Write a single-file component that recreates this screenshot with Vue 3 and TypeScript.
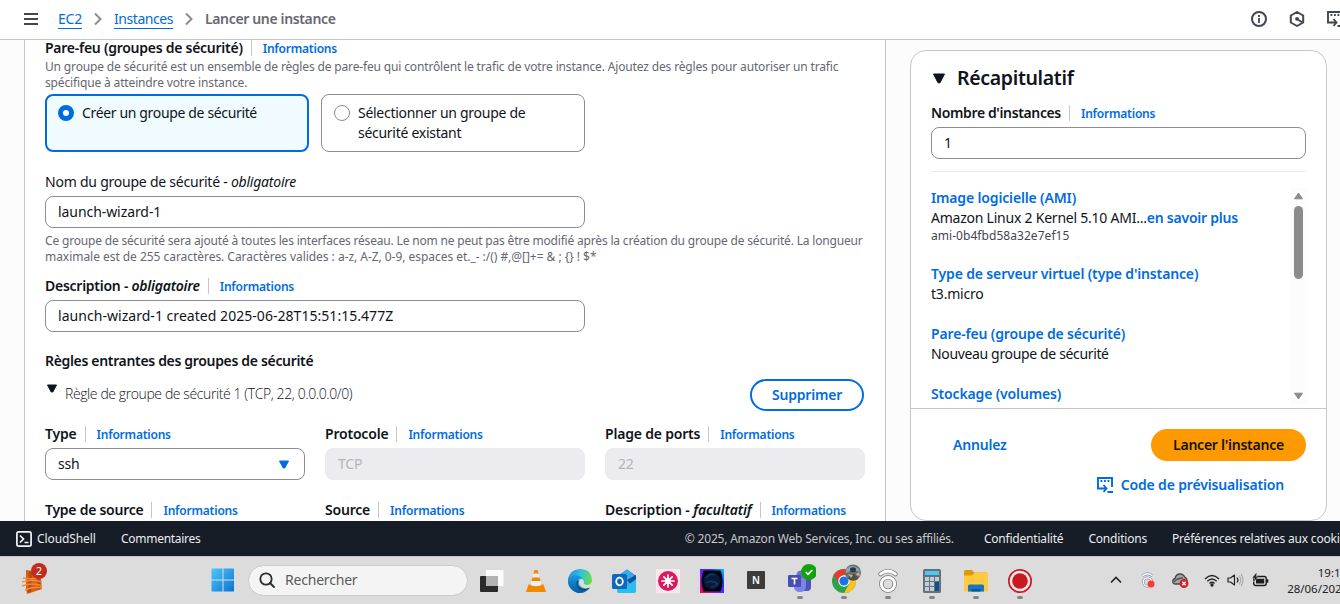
<script setup lang="ts">
interface Field {
  key: string
  label: string
  qualifier?: string
  value?: string
  kind?: 'select' | 'disabled'
}

const info = 'Informations'

const fields: Field[] = [
  { key: 'type', label: 'Type', value: 'ssh', kind: 'select' },
  { key: 'protocol', label: 'Protocole', value: 'TCP', kind: 'disabled' },
  { key: 'ports', label: 'Plage de ports', value: '22', kind: 'disabled' },
  { key: 'srctype', label: 'Type de source' },
  { key: 'source', label: 'Source' },
  { key: 'desc', label: 'Description - ', qualifier: 'facultatif' },
]
</script>

<template>
  <div class="screen">
    <header class="topbar">
      <svg class="burger" width="16" height="14" viewBox="0 0 16 14"><path d="M1 2h14M1 7h14M1 12h14" stroke="#424650" stroke-width="2" /></svg>
      <nav class="crumbs">
        <a class="crumb c1">EC2</a>
        <svg width="10" height="14" viewBox="0 0 10 14"><path d="M2 1.500l5.500 5.500L2 12.500" fill="none" stroke="#8c8c94" stroke-width="2" /></svg>
        <a class="crumb c2">Instances</a>
        <svg width="10" height="14" viewBox="0 0 10 14"><path d="M2 1.500l5.500 5.500L2 12.500" fill="none" stroke="#8c8c94" stroke-width="2" /></svg>
        <span class="here">Lancer une instance</span>
      </nav>
      <div class="tools">
        <svg width="16" height="16" viewBox="0 0 16 16" fill="none" stroke="#424650" stroke-width="2"><circle cx="8" cy="8" r="7" /><path d="M8 7v5M8 4v2" stroke-width="1.800" /></svg>
        <svg width="16" height="16" viewBox="0 0 16 16" fill="none" stroke="#424650" stroke-width="2"><path d="M8 1l6.200 3.500v7L8 15l-6.200-3.500v-7z" stroke-linejoin="round" /><path d="M8 8l5.500 3.500" /><circle cx="8" cy="7.800" r="1.900" fill="#424650" stroke="none" /></svg>
        <svg width="16" height="16" viewBox="0 0 16 16" fill="none" stroke="#424650" stroke-width="1.900"><path d="M4.500 11.500H1V1h14v9" /><path d="M3.500 4h1.800M7 4h1.800M10.500 4h1.800M4 11.500h5M6.500 8l3 3.500-3 3.500M10.500 15H16" /></svg>
      </div>
    </header>

    <main class="body">
      <section class="form">
        <div class="label first"><b class="l-fw">Pare-feu (groupes de sécurité)</b><i class="bar" /><a class="info">{{ info }}</a></div>
        <p class="hint"><span class="h1">Un groupe de sécurité est un ensemble de règles de pare-feu qui contrôlent le trafic de votre instance. Ajoutez des règles pour autoriser un trafic</span><br><span class="h2">spécifique à atteindre votre instance.</span></p>
        <div class="tiles">
          <div class="tile on"><span class="radio" /><span class="txt">Créer un groupe de sécurité</span></div>
          <div class="tile"><span class="radio" /><span class="txt">Sélectionner un groupe de<br>sécurité existant</span></div>
        </div>
        <div class="label name"><span class="l-name">Nom du groupe de sécurité - <em>obligatoire</em></span></div>
        <div class="input half"><span class="v-name">launch-wizard-1</span></div>
        <p class="hint below"><span class="h3">Ce groupe de sécurité sera ajouté à toutes les interfaces réseau. Le nom ne peut pas être modifié après la création du groupe de sécurité. La longueur</span><br><span class="h4">maximale est de 255 caractères. Caractères valides : a-z, A-Z, 0-9, espaces et._- :/() #,@[]+= &amp; ; {} ! $*</span></p>
        <div class="label descr"><b class="l-descr">Description - <em>obligatoire</em></b><i class="bar" /><a class="info">{{ info }}</a></div>
        <div class="input half"><span class="v-descr">launch-wizard-1 created 2025-06-28T15:51:15.477Z</span></div>
        <div class="label rules"><b class="l-rules">Règles entrantes des groupes de sécurité</b></div>
        <div class="rule">
          <svg width="12" height="9" viewBox="0 0 12 9"><path d="M1.500 1h9L6.800 8H5.200z" fill="#0f141a" stroke="#0f141a" stroke-linejoin="round" /></svg>
          <span class="rule-text">Règle de groupe de sécurité 1 (TCP, 22, 0.0.0.0/0)</span>
          <button class="remove">Supprimer</button>
        </div>
        <div class="grid">
          <div v-for="f in fields" :key="f.key" class="field">
            <div class="label"><b :class="'l-' + f.key">{{ f.label }}<em v-if="f.qualifier">{{ f.qualifier }}</em></b><i class="bar" /><a class="info">{{ info }}</a></div>
            <div v-if="f.value" class="input" :class="f.kind">
              <span :class="'v-' + f.key">{{ f.value }}</span>
              <svg v-if="f.kind === 'select'" width="12" height="9" viewBox="0 0 12 9"><path d="M1.500 1h9L6.800 8H5.200z" fill="#006ce0" stroke="#006ce0" stroke-linejoin="round" /></svg>
            </div>
          </div>
        </div>
      </section>

      <aside class="summary">
        <div class="upper">
          <h2><svg width="14" height="11" viewBox="0 0 14 11"><path d="M1.500 1h11L8 9.800H6z" fill="#0f141a" stroke="#0f141a" stroke-linejoin="round" /></svg><span>Récapitulatif</span></h2>
          <div class="label"><b class="l-count">Nombre d'instances</b><i class="bar" /><a class="info">{{ info }}</a></div>
          <div class="input"><span>1</span></div>
          <div class="scroll">
            <dl>
              <dt class="s1">Image logicielle (AMI)</dt>
              <dd><span class="ami">Amazon Linux 2 Kernel 5.10 AMI...</span><a class="more">en savoir plus</a></dd>
              <dd class="small">ami-0b4fbd58a32e7ef15</dd>
              <dt class="s2">Type de serveur virtuel (type d'instance)</dt>
              <dd class="micro">t3.micro</dd>
              <dt class="s3">Pare-feu (groupe de sécurité)</dt>
              <dd class="newgrp">Nouveau groupe de sécurité</dd>
              <dt class="s4">Stockage (volumes)</dt>
            </dl>
            <div class="track">
              <svg width="11" height="8" viewBox="0 0 11 8"><path d="M5.500 1L9.500 6.800h-8z" fill="#8b8b8b" stroke="#8b8b8b" stroke-linejoin="round" /></svg>
              <div class="thumb" />
              <svg class="down" width="11" height="8" viewBox="0 0 11 8"><path d="M5.500 7L9.500 1.200h-8z" fill="#8b8b8b" stroke="#8b8b8b" stroke-linejoin="round" /></svg>
            </div>
          </div>
        </div>
        <div class="actions">
          <div class="row"><a class="cancel">Annulez</a><button class="launch"><span>Lancer l'instance</span></button></div>
          <a class="preview">
            <svg width="16" height="16" viewBox="0 0 16 16" fill="none" stroke="#006ce0" stroke-width="1.900"><path d="M4.500 11.500H1V1h14v9" /><path d="M3.500 4h1.800M7 4h1.800M10.500 4h1.800M4 11.500h5M6.500 8l3 3.500-3 3.500M10.500 15H16" /></svg>
            <span>Code de prévisualisation</span>
          </a>
        </div>
      </aside>
    </main>

    <footer class="footer">
      <svg width="16" height="16" viewBox="0 0 16 16" fill="none" stroke="#f3f3f7" stroke-width="1.700"><rect x=".9" y=".9" width="14.200" height="14.200" rx="1.800" /><path d="M4 4.500l3.500 3.500L4 11.500M8.500 11.500h4" /></svg>
      <span class="f1">CloudShell</span>
      <span class="f2">Commentaires</span>
      <span class="f3">© 2025, Amazon Web Services, Inc. ou ses affiliés.</span>
      <span class="f4">Confidentialité</span>
      <span class="f5">Conditions</span>
      <span class="f6">Préférences relatives aux cookies</span>
    </footer>

    <div class="taskbar">
      <div class="widget">
        <svg width="28" height="32" viewBox="0 0 28 32">
          <path d="M5 6l14 2 2 17-15 5-1-6z" fill="#d9600f" />
          <path d="M8 7l3 1-1 20-3 1zM16 9l3 0 1 16-3 1z" fill="#b34b10" />
          <g stroke="#f08a42" stroke-width="1.500" fill="none"><path d="M2 14q10 2 18-1M1 18q11-3 20 0M1 22q11-4 20 0M4 26q9-4 17-2" /></g>
        </svg>
        <span class="count">2</span>
      </div>
      <svg class="start" width="24" height="24" viewBox="0 0 24 24">
        <defs><linearGradient id="win" x1="0" y1="0" x2="1" y2="1" gradientUnits="objectBoundingBox"><stop offset="0" stop-color="#4cc8fa" /><stop offset="1" stop-color="#0a74d2" /></linearGradient></defs>
        <path d="M1 .5h10.500v11H.500V1zM12.500.5h10l.5.5v10.500h-10.500zM.5 12.500h11v11H1l-.5-.5zM12.500 12.500h10.500V23l-.5.5h-10z" fill="url(#win)" />
      </svg>
      <div class="search">
        <svg width="16" height="16" viewBox="0 0 16 16" fill="none" stroke="#2b2b2b" stroke-width="1.800"><circle cx="7" cy="7" r="5.700" /><path d="M11 11l4 4" stroke-linecap="round" /></svg>
        <span>Rechercher</span>
      </div>
      <div class="apps">
        <span class="app"><svg width="28" height="32" viewBox="0 0 28 32"><rect x="2" y="12" width="18" height="16" rx="1" fill="#2a2a2a" /><rect x="8" y="6" width="17.500" height="16" rx="1" fill="#fff" opacity=".88" /><path d="M8 12h12v10H8z" fill="#b3b3b3" /></svg></span>
        <span class="app"><svg width="28" height="32" viewBox="0 0 28 32"><path d="M6.500 20.500h15l2.500 7.500H4z" fill="#f18b00" /><path d="M12.500 6h3l5 18q-6.500 3-13 0z" fill="#f28500" /><path d="M11.400 9.500h5.200l1.200 4h-7.600zM9.300 17h9.400l1 4q-5.700 2.500-11.400 0z" fill="#ececec" /></svg></span>
        <span class="app"><svg width="28" height="32" viewBox="0 0 28 32">
          <defs><linearGradient id="e1" x1="0" y1="0" x2="1" y2=".3"><stop offset="0" stop-color="#1b8bd8" /><stop offset=".55" stop-color="#2fc2df" /><stop offset="1" stop-color="#66dc4b" /></linearGradient><linearGradient id="e2" x1="0" y1="0" x2="0" y2="1"><stop offset="0" stop-color="#1c9ade" /><stop offset="1" stop-color="#0c59a4" /></linearGradient></defs>
          <path d="M14 5a12 12 0 1 0 10 18.500q-4 2-8-.5-4-2.500-3-6 .5-2 2.500-2 2.500.5 2.500 3-.5 1.500.5 2.200 1.200.8 3 .8 4.500-.5 4.500-5Q25 5 14 5z" fill="url(#e1)" />
          <path d="M2 17c.5-4 4-5.800 8-5.800 3 0 5.500 1.500 6.500 3.300-4-1-7 2.500-5 7 2.500 4.500 8 4.500 12.500 2A12 12 0 0 1 2 17z" fill="url(#e2)" />
          <path d="M10.800 17c-1.500 4 1 9.500 6.200 9.800 3 0 5.500-1.300 7-3.300-4 2-8 1.500-10.500-1-1.500-1.500-1.700-3-1-4.500.7-1.700-1-2.500-1.700-1z" fill="#114a8b" /></svg></span>
        <span class="app"><svg width="28" height="32" viewBox="0 0 28 32"><path d="M8 12l9-6.500L26 12v15H8z" fill="#1267b7" /><path d="M9 11l8-5.500L24 11v12H9z" fill="#39a9e8" /><path d="M17 16l9-5v7l-4 4z" fill="#0f4f9e" /><path d="M7 20l10 2 9-7v12q0 2-2 2H9q-2 0-2-2z" fill="#29bdf0" /><rect x="2" y="10" width="15" height="15" rx="1.500" fill="#0f68bd" /><ellipse cx="9.500" cy="17.500" rx="3.300" ry="3.800" fill="none" stroke="#fff" stroke-width="1.800" /></svg></span>
        <span class="app"><svg width="28" height="32" viewBox="0 0 28 32"><path d="M2 5h24v24H2z" fill="#fbe6ec" /><circle cx="14" cy="17" r="10" fill="#d81b60" /><path d="M14 11v12M8 17h12M9.800 12.800l8.400 8.400M18.200 12.800l-8.400 8.400" stroke="#fff" stroke-width="1.700" stroke-linecap="round" /><circle cx="14" cy="17" r="2.700" fill="#fff" /></svg></span>
        <span class="app"><svg width="28" height="32" viewBox="0 0 28 32"><defs><linearGradient id="b1" x1="0" y1="1" x2="1" y2="0"><stop offset="0" stop-color="#ff0050" /><stop offset=".4" stop-color="#7a1bff" /><stop offset=".7" stop-color="#1b38ff" /><stop offset="1" stop-color="#00c8ff" /></linearGradient></defs><path d="M2 5h24v24H2z" fill="url(#b1)" /><path d="M5.500 6.500h17q2 4 2 10.500t-2 10.500h-17q-2-4-2-10.500t2-10.500z" fill="#030409" /><circle cx="14" cy="17" r="8.500" fill="#081a3a" /><path d="M8 14q4-5 9-3M8 19q6-4 12 1M13 23q4 0 6-3" stroke="#123a70" stroke-width="1.300" fill="none" /></svg></span>
        <span class="app"><span class="notion">N</span></span>
        <span class="app run"><svg width="32" height="32" viewBox="0 0 32 32"><circle cx="17" cy="11" r="4.500" fill="#6b70d8" /><circle cx="24" cy="14" r="3" fill="#4c52bb" /><path d="M20 16h7v7q0 4-4 4h-5z" fill="#4b53bc" /><path d="M10 14h12v8q0 6-6 6t-6-6z" fill="#7b83eb" /><rect x="4" y="11" width="13" height="12" rx="1.200" fill="#464eb8" /><path d="M7.500 14.500h6M10.500 14.500v6" stroke="#fff" stroke-width="1.600" /><circle cx="25" cy="8" r="8" fill="#13a10e" /><path d="M21.800 8l2.200 2.300 4.300-4.300" fill="none" stroke="#fff" stroke-width="1.700" /></svg></span>
        <span class="app run"><svg width="34" height="32" viewBox="-1 0 34 32"><circle cx="16" cy="17" r="12" fill="#2ba24c" /><path d="M5.600 11A12 12 0 0 1 26.400 11H16l-5 9z" fill="#e33b2e" /><path d="M26.400 11A12 12 0 0 1 16 29l5.200-9L16 11z" fill="#fcc31e" /><circle cx="16" cy="17" r="5.700" fill="#fff" /><circle cx="16" cy="17" r="4.600" fill="#1a73e8" /><circle cx="25" cy="8.500" r="8" fill="#66736a" /><path d="M18 5q6-6 13 0l1 3q-7-3-14 1z" fill="#8ea3b2" /><path d="M22 4.500q3-2.500 6 0l-.5 3.500h-5z" fill="#29384a" /><path d="M20 15l2-5h6l2 5q-5 3-10 0z" fill="#4a5148" /><path d="M20 10l5 1-2 3zM27 11l4-3 1 4z" fill="#d0ab8c" /></svg></span>
        <span class="app run"><svg width="28" height="32" viewBox="0 0 28 32" fill="none"><circle cx="14" cy="20" r="6.700" stroke="#858585" stroke-width="4.500" /><circle cx="14" cy="20" r="6.700" stroke="#fff" stroke-width="2.700" /><path d="M6.500 10Q14 4 21.500 10" stroke="#858585" stroke-width="4.500" stroke-linecap="round" /><path d="M6.500 10Q14 4 21.500 10" stroke="#fff" stroke-width="2.700" stroke-linecap="round" /></svg></span>
        <span class="app run"><svg width="28" height="32" viewBox="0 0 28 32"><rect x="5" y="5" width="18" height="24" rx="1.500" fill="#66727b" /><path d="M7 7h14v4H7z" fill="#4cc8f4" /><path d="M7 13h4v4H7zM12 13h4v4h-4zM17 13h4v4h-4zM7 18h4v4H7zM12 18h4v4h-4zM7 23h4v4H7zM12 23h4v4h-4z" fill="#c3cdd3" /><path d="M17 18h4v9h-4z" fill="#0c5099" /></svg></span>
        <span class="app run"><svg width="28" height="32" viewBox="0 0 28 32"><path d="M2 7.500Q2 6 3.500 6H10l2 2.500h12.500Q26 8.500 26 10v5H2z" fill="#dc9a0a" /><path d="M2 11.500h8l3-3h11.500Q26 8.500 26 10v16.500q0 1-1 1H3q-1 0-1-1z" fill="#ffca3d" /><path d="M6 22q0-1.500 1.500-1.500h13q1.500 0 1.500 1.500v5.500H6z" fill="#1476ca" /><path d="M9.500 25h9v2.500h-9z" fill="#0b559b" /></svg></span>
        <span class="app run"><svg width="28" height="32" viewBox="0 0 28 32"><circle cx="14" cy="17" r="11.200" fill="#f6e9ea" stroke="#cc1c26" stroke-width="1.700" /><circle cx="14" cy="17" r="7.800" fill="#c81922" /></svg></span>
      </div>
      <div class="tray">
        <svg class="chev" width="12" height="8" viewBox="0 0 12 8"><path d="M1 6.500L6 1.500l5 5" fill="none" stroke="#222" stroke-width="1.600" /></svg>
        <svg class="rec" width="15" height="16" viewBox="0 0 15 16"><circle cx="6.500" cy="10" r="4.200" fill="none" stroke="#8b97a9" stroke-width="2.700" /><circle cx="6.500" cy="10" r="4.200" fill="none" stroke="#fff" stroke-width="1.300" /><path d="M1.500 4Q6.500-.5 11.500 4" fill="none" stroke="#8b97a9" stroke-width="2.700" /><path d="M1.500 4Q6.500-.5 11.500 4" fill="none" stroke="#fff" stroke-width="1.200" /><circle cx="10" cy="12" r="3.500" fill="#fb3a36" /></svg>
        <svg class="cloud" width="17" height="16" viewBox="0 0 17 16"><path d="M3.500 12Q.8 12 .8 9.500T3 6.500Q4 2 8 2q3.500 0 5 3.500 2 .5 2 3V12z" fill="#a5a5a5" stroke="#484848" stroke-width="1.300" /><path d="M2 10q3-4 9-4" stroke="#555" stroke-width="1.500" fill="none" /><circle cx="12" cy="11.500" r="4.500" fill="#d81f2a" /><path d="M10.300 9.800l3.400 3.400M13.700 9.800l-3.400 3.400" stroke="#fff" stroke-width="1.300" /></svg>
        <svg class="wifi" width="16" height="13" viewBox="0 0 16 13" fill="none" stroke="#222" stroke-width="1.300"><path d="M1 5Q8-2 15 5M3.300 7.300q4.700-4.700 9.400 0M5.500 9.500q2.500-2.500 5 0" /><circle cx="8" cy="11" r="1" fill="#222" /></svg>
        <svg class="vol" width="17" height="14" viewBox="0 0 17 14" fill="none" stroke="#222" stroke-width="1.200"><path d="M1 5v4h2.500L7.500 12V2L3.500 5z" stroke-linejoin="round" /><path d="M10 4.500q2 2.500 0 5" /><path d="M12 2.500q3.500 4.500 0 9M14 1q4 6 0 12" stroke="#aaa" /></svg>
        <svg class="bat" width="17" height="14" viewBox="0 0 17 14"><rect x="1.700" y="3.500" width="12.500" height="9" rx="2" fill="none" stroke="#1c1c1c" stroke-width="1.400" /><path d="M4 5.700h8.200v4.800H4zM14.700 6.200h1.600v3.500h-1.600z" fill="#1c1c1c" /><path d="M4 0L0 5h2.500l-1 4L6.500 4H4l1-4z" fill="#1c1c1c" stroke="#dcdcdc" stroke-width=".5" /></svg>
      </div>
      <div class="clock"><span class="time">19:17</span><span>28/06/2025</span></div>
    </div>
  </div>
</template>

<style>
body { margin: 0; overflow: hidden; }
</style>

<style scoped>
* { box-sizing: border-box; }
.screen { width: 1340px; height: 604px; display: flex; flex-direction: column; overflow: hidden; background: #fcfcfd; color: #0f141a; font: 14px/20px "Noto Sans", "Open Sans", sans-serif; white-space: nowrap; letter-spacing: -0.2px; }
svg { display: block; flex: none; }
a { color: #006ce0; }
b { font-weight: 600; }
button { font: inherit; letter-spacing: inherit; padding: 0; }
p, h2, dl, dd { margin: 0; }

.topbar { flex: none; height: 40px; padding-bottom: 1px; border-bottom: 1px solid #c6c6cd; background: #fff; display: flex; align-items: center; }
.burger { margin-left: 23px; }
.crumbs { display: flex; align-items: center; margin-left: 19px; }
.crumb { line-height: 18px; border-bottom: 1px solid #006ce0; }
.c2 { letter-spacing: -0.45px; }
.crumbs svg { margin: 0 11px; }
.here { font-weight: 600; color: #656871; letter-spacing: -0.35px; }
.tools { display: flex; gap: 22px; margin-left: auto; margin-right: -3px; }

.body { flex: none; height: 481px; display: flex; align-items: flex-start; overflow: hidden; }
.form { width: 862px; height: 481px; margin-left: 24px; padding: 0 20px; border: solid #c6c6cd; border-width: 0 1px; background: #fff; overflow: hidden; }
.label { height: 20px; display: flex; align-items: center; }
.label.first { margin-top: -2px; }
.bar { width: 1px; height: 16px; margin: 0 11px 0 8px; background: #c6c6cd; }
.info { font-size: 12px; font-weight: 600; letter-spacing: -0.22px; padding-top: 1px; }
.l-fw, .l-descr, .l-srctype { letter-spacing: -0.26px; }
.l-desc { letter-spacing: -0.14px; }
.l-rules { letter-spacing: -0.33px; }
.l-count { letter-spacing: -0.37px; }
.hint { font-size: 12px; line-height: 16px; color: #656871; }
.hint span { position: relative; top: 1px; }
.h1, .h2 { letter-spacing: -0.15px; }
.h3 { letter-spacing: -0.18px; }
.h4 { letter-spacing: -0.04px; }
.tiles { display: flex; gap: 12px; margin-top: 4px; }
.tile { width: 264px; height: 58px; padding: 8px 12px; border: 1px solid #8c8c94; border-radius: 8px; display: flex; gap: 8px; letter-spacing: -0.28px; }
.tile.on { border: 2px solid #006ce0; padding: 7px 11px; background: #f0fbff; letter-spacing: -0.35px; }
.radio { width: 16px; height: 16px; margin-top: 2px; border: 1px solid #8c8c94; border-radius: 50%; background: #fff; }
.on .radio { border: 5px solid #006ce0; }
.label.name { margin-top: 20px; letter-spacing: -0.23px; }
.input { height: 32px; margin-top: 4px; padding: 0 12px; border: 1px solid #8c8c94; border-radius: 8px; background: #fff; display: flex; align-items: center; }
.half { width: 540px; }
.v-name { letter-spacing: -0.07px; }
.v-descr { letter-spacing: 0.04px; }
.hint.below { margin-top: 4px; }
.label.descr { margin-top: 12px; }
.label.rules { margin-top: 19px; }
.rule { display: flex; height: 32px; margin-top: 8px; }
.rule svg { margin: 5px 7px 0 1px; }
.rule-text { font-family: "Open Sans", "Noto Sans", sans-serif; font-weight: 300; line-height: 29px; letter-spacing: -0.4px; }
.remove { width: 114px; height: 32px; margin: 0 1px 0 auto; border: 2px solid #006ce0; border-radius: 16px; background: #fff; color: #006ce0; font-weight: 600; }
.grid { display: grid; grid-template-columns: repeat(3, 260px); gap: 20px; margin-top: 13px; }
.select { justify-content: space-between; padding-right: 14px; }
.disabled { background: #ebebf0; border-color: #ebebf0; color: #b4b4bb; }

.summary { width: 417px; height: 471px; margin: 10px 0 0 24px; border: 1px solid #c6c6cd; border-radius: 16px; background: #fff; overflow: hidden; }
.upper { height: 358px; padding: 15px 20px 0; border-bottom: 1px solid #c6c6cd; }
h2 { display: flex; align-items: center; gap: 11px; height: 24px; font-size: 19.5px; font-weight: 600; padding-left: 1px; letter-spacing: -0.33px; }
.upper .label { margin-top: 13px; }
.scroll { display: flex; justify-content: space-between; height: 233px; margin-top: 12px; padding-top: 16px; border-top: 1px solid #ebebf0; }
dt { color: #006ce0; font-weight: 600; margin-top: 20px; letter-spacing: -0.15px; }
dt:first-child { margin-top: 0; }
.ami, .more { letter-spacing: -0.23px; }
.more { font-weight: 600; }
.small { font-size: 12px; line-height: 16px; color: #424650; letter-spacing: 0.05px; }
.newgrp { letter-spacing: -0.35px; }
.track { width: 15px; height: 216px; background: #fcfcfc; display: flex; flex-direction: column; align-items: center; padding: 4px 0 4px; }
.thumb { width: 9px; height: 73px; margin-top: 6px; border-radius: 5px; background: #8b8b8b; }
.down { margin-top: auto; }
.actions { padding: 20px 20px 0; }
.row { display: flex; justify-content: space-between; align-items: center; padding-left: 22px; }
.cancel { font-weight: 600; }
.launch { width: 155px; height: 32px; border: 0; border-radius: 16px; background: #ff9900; color: #0f141a; font-weight: 600; letter-spacing: -0.24px; }
.preview { display: flex; align-items: center; justify-content: flex-end; gap: 8px; margin: 14px 22px 0 0; font-weight: 600; letter-spacing: -0.16px; }

.footer { flex: none; height: 35px; padding: 1px 0 0 16px; display: flex; align-items: center; background: #161d26; color: #ebebf0; font-size: 12px; }
.f1 { margin-left: 5px; width: 84px; letter-spacing: -0.1px; }
.f2 { letter-spacing: -0.28px; }
.f3 { margin-left: auto; color: #c6c6cd; }
.f4 { margin-left: 30px; }
.f5, .f6 { margin-left: 25px; }
.f6 { width: 168px; }

.taskbar { flex: none; height: 48px; padding-bottom: 1px; border-top: 1px solid #c6c6c9; background: #dcdcdd; display: flex; align-items: center; }
.widget { width: 28px; height: 32px; margin-left: 21px; position: relative; }
.count { position: absolute; left: 10px; top: -1px; width: 16px; height: 16px; border-radius: 50%; background: #c42b1c; color: #fff; font-size: 11px; line-height: 16px; text-align: center; letter-spacing: 0; }
.start { margin-left: 162px; margin-right: 13px; }
.search { width: 220px; height: 31px; border: 1px solid #cbcbcd; border-radius: 16px; background: #f4f4f5; display: flex; align-items: center; gap: 10px; padding-left: 10px; color: #5b5b5b; }
.apps { display: flex; margin-left: 2px; }
.app { width: 44px; height: 46px; display: flex; justify-content: center; align-items: center; position: relative; padding-bottom: 1px; }
.run::after { content: ""; position: absolute; bottom: 4px; left: 19px; width: 6px; height: 3px; border-radius: 2px; background: #858585; }
.notion { width: 18px; height: 18px; margin-top: 1px; background: #3c3c3c; color: #fff; font-size: 10px; font-weight: 600; line-height: 18px; text-align: center; letter-spacing: 0; border-radius: 1px; }
.tray { display: flex; align-items: center; margin-left: 68px; }
.rec { margin-left: 19px; }
.cloud { margin-left: 16px; }
.wifi { margin-left: 15px; }
.vol { margin-left: 7px; }
.bat { margin-left: 8px; }
.clock { display: flex; flex-direction: column; align-items: flex-end; margin-left: auto; margin-right: -8px; padding-top: 1px; font-size: 11.5px; line-height: 16px; letter-spacing: -0.05px; color: #222; }
.time { margin-right: 1px; }
</style>
